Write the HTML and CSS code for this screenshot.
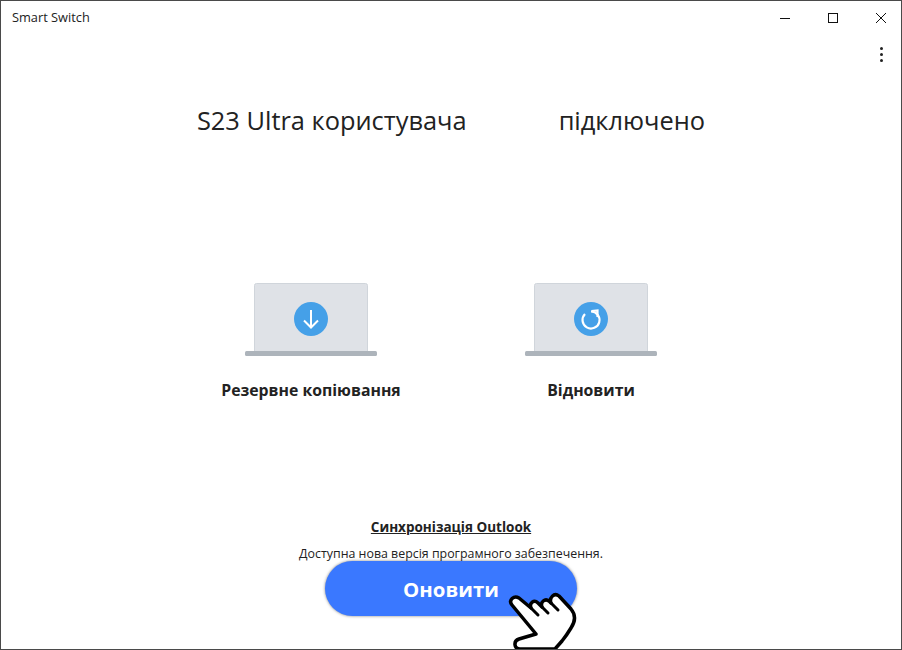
FILE: index.html
```html
<!DOCTYPE html>
<html lang="uk">
<head>
    <meta charset="UTF-8">
    <title>Smart Switch</title>
    <link rel="stylesheet" href="styles.css">
</head>
<body>
    <div class="window">
        <div class="titlebar">
            <span class="app-title">Smart Switch</span>
            <div class="window-controls">
                <svg class="ctl" width="48" height="32" viewBox="0 0 48 32"><path d="M19 16.5h10" stroke="#111" fill="none"/></svg>
                <svg class="ctl" width="48" height="32" viewBox="0 0 48 32"><rect x="19.5" y="11.5" width="9" height="9" stroke="#111" fill="none"/></svg>
                <svg class="ctl" width="48" height="32" viewBox="0 0 48 32"><path d="M19 11l10 10M29 11L19 21" stroke="#111" fill="none"/></svg>
            </div>
        </div>
        <div class="menu-row">
            <span class="dots"><i></i><i></i><i></i></span>
        </div>

        <h1 class="connected">
            <span>S23 Ultra користувача</span>
            <span>підключено</span>
        </h1>

        <div class="options">
            <div class="option">
                <svg class="laptop" width="132" height="74" viewBox="0 0 132 74">
                    <rect x="9.5" y="0.5" width="113" height="70" rx="2" fill="#dfe2e7" stroke="#d0d5db"/>
                    <rect x="0" y="68" width="132" height="5" rx="1.5" fill="#adb4bb"/>
                    <circle cx="66" cy="36" r="17" fill="#45a0e8"/>
                    <path d="M66 27v17M59 37.5l7 7 7-7" stroke="#fff" stroke-width="2" fill="none"/>
                </svg>
                <div class="option-label">Резервне копіювання</div>
            </div>
            <div class="option">
                <svg class="laptop" width="132" height="74" viewBox="0 0 132 74">
                    <rect x="9.5" y="0.5" width="113" height="70" rx="2" fill="#dfe2e7" stroke="#d0d5db"/>
                    <rect x="0" y="68" width="132" height="5" rx="1.5" fill="#adb4bb"/>
                    <circle cx="66" cy="36" r="17" fill="#45a0e8"/>
                    <path d="M66 28.5a8.5 8.5 0 1 1-6 2.5" stroke="#fff" stroke-width="2.2" fill="none"/>
                    <path d="M66.5 28l6-.5v6.5" stroke="#fff" stroke-width="2.2" fill="none"/>
                </svg>
                <div class="option-label">Відновити</div>
            </div>
        </div>

        <div class="footer">
            <a class="outlook-link">Синхронізація Outlook</a>
            <p class="update-note">Доступна нова версія програмного забезпечення.</p>
            <div class="update-wrap">
                <button class="update-btn">Оновити</button>
                <svg class="hand" width="90" height="70" viewBox="0 0 90 70">
                    <path d="M12 26C8 21 14 16 19 19L31 29C29 24 34 20 38 24L42 28C40 23 45 19 49 22L51 24C49 19 54 13 59 17L71 30C76 36 75 43 71 49C68 54 66 57 62 62L55 70H20C14 70 13 62 19 60L36 55Z" fill="#fff" stroke="#000" stroke-width="3.5" stroke-linejoin="round"/>
                    <path d="M31 29l7 7M42 28l6 6M51 24l7 7" stroke="#000" stroke-width="3" fill="none" stroke-linecap="round"/>
                </svg>
            </div>
        </div>
    </div>
</body>
</html>
```

FILE: styles.css
```css
* {
    margin: 0;
    padding: 0;
    box-sizing: border-box;
}

body {
    font-family: "Open Sans", "Noto Sans", sans-serif;
    background: white;
    color: #222;
    overflow: hidden;
}

.window {
    width: 902px;
    height: 650px;
    border: 1px solid #4a4a4a;
    overflow: hidden;
    display: flex;
    flex-direction: column;
}

.titlebar {
    display: flex;
    justify-content: space-between;
    height: 32px;
}

.app-title {
    font-size: 12.8px;
    line-height: 32px;
    padding-left: 11px;
    color: #222;
}

.window-controls {
    display: flex;
    padding-top: 1px;
    margin-right: -4px;
}

.ctl {
    display: block;
}

.menu-row {
    display: flex;
    justify-content: flex-end;
    height: 44px;
    padding: 14px 18px 0 0;
}

.dots {
    display: flex;
    flex-direction: column;
    gap: 3px;
}

.dots i {
    width: 3px;
    height: 3px;
    border-radius: 50%;
    background: #222;
}

.connected {
    display: flex;
    justify-content: center;
    gap: 92px;
    font-size: 25.4px;
    font-weight: 400;
    line-height: 34px;
    height: 34px;
    margin-top: 26px;
}

.options {
    display: flex;
    justify-content: center;
    margin-top: 146px;
}

.option {
    width: 280px;
    display: flex;
    flex-direction: column;
    align-items: center;
}

.laptop {
    display: block;
}

.option-label {
    font-size: 15.8px;
    font-weight: 700;
    line-height: 22px;
    margin-top: 22px;
}

.footer {
    display: flex;
    flex-direction: column;
    align-items: center;
    margin-top: 117px;
}

.outlook-link {
    font-size: 13.5px;
    font-weight: 700;
    line-height: 18px;
    text-decoration: underline;
}

.update-note {
    font-size: 12.4px;
    line-height: 17px;
    margin-top: 9px;
}

.update-wrap {
    position: relative;
    margin-top: -1px;
}

.update-btn {
    display: block;
    width: 252px;
    height: 55px;
    border: none;
    border-radius: 28px;
    background: #3a78ff;
    color: white;
    font-family: inherit;
    font-size: 20.4px;
    font-weight: 700;
    box-shadow: 0 0 3px rgba(0,0,0,0.5);
}

.hand {
    position: absolute;
    left: 175px;
    top: 18px;
}
```
